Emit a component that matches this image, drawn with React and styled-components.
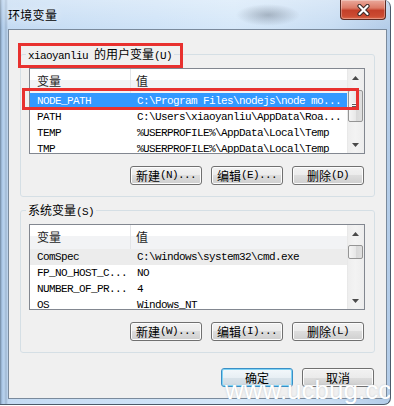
import React from 'react'
import styled, { createGlobalStyle } from 'styled-components'

const cjk = `"Noto Sans CJK SC", "Liberation Sans", sans-serif`
const mono = `"Liberation Mono", "Noto Sans CJK SC", monospace`

const GlobalStyle = createGlobalStyle`
  html, body {
    margin: 0;
    padding: 0;
    background: #fff;
  }
  body {
    width: 394px;
    height: 406px;
    overflow: hidden;
    font-family: ${cjk};
  }
`

const Window = styled.div`
  position: relative;
  width: 391px;
  height: 405px;
  box-sizing: border-box;
  padding: 0 3px 5px 8px;
  display: flex;
  flex-direction: column;
  overflow: hidden;
  border-right: 1px solid #4c5b6b;
  border-bottom: 1px solid #4c5b6b;
  border-radius: 0 7px 7px 0;
  background:
    radial-gradient(ellipse 32px 11px at 268px 15px, rgba(70, 80, 95, 0.35), rgba(70, 80, 95, 0) 100%),
    linear-gradient(180deg, rgba(255, 255, 255, 0.3) 0, rgba(255, 255, 255, 0) 28px),
    linear-gradient(90deg, #6f869e 0, #a9c6e6 2px, #b9d3ee 4px, #9fb7d2 6px, #c4dbf3 8px, #cfe3f7 40%, #d6e8f9 60%, #c8ddf3 85%, #b3cce8 100%);
`

const TitleBar = styled.div`
  height: 29px;
  flex: none;
  display: flex;
  justify-content: space-between;
  align-items: flex-start;
`

const Title = styled.span`
  font-family: ${cjk};
  font-size: 12px;
  line-height: 29px;
  letter-spacing: 0.3px;
  color: #000;
  text-shadow: 0 0 8px rgba(255, 255, 255, 0.9);
`

const CloseButton = styled.button`
  width: 46px;
  height: 20px;
  margin: 0 1px 0 0;
  padding: 0;
  box-sizing: border-box;
  border: 1px solid #5d2b23;
  border-top: none;
  border-radius: 0 0 4px 4px;
  background: linear-gradient(#eaa99c 0%, #dc7a66 42%, #c4402a 55%, #cb4b32 85%, #dc6a4c 100%);
  box-shadow: inset 0 0 0 1px rgba(255, 255, 255, 0.3);
  display: flex;
  align-items: center;
  justify-content: center;
`

const Panel = styled.div`
  flex: 1;
  border: 1px solid #7a8a9c;
  background: #f0f0f0;
  padding: 16px 11px 0 11px;
  display: flex;
  flex-direction: column;
`

const Group = styled.fieldset`
  margin: ${({ $mt }) => $mt}px 0 0 0;
  padding: 6px 9px 11px 8px;
  border: 1px solid #d5dfe5;
  border-radius: 3px;
  min-width: 0;
`

const Legend = styled.legend`
  padding: 0 2px;
  margin-left: -3px;
  height: 16px;
  line-height: 16px;
  font-family: ${cjk};
  font-size: 12px;
  color: #000;
  white-space: nowrap;
`

const Mono = styled.span`
  font-family: ${mono};
  font-size: 11px;
  letter-spacing: -0.6px;
`

const ListBox = styled.div`
  height: 86px;
  box-sizing: border-box;
  border: 1px solid #828790;
  background: #fff;
  display: flex;
`

const Columns = styled.div`
  flex: 1;
  min-width: 0;
  display: flex;
  flex-direction: column;
  overflow: hidden;
`

const HeaderRow = styled.div`
  height: 24px;
  flex: none;
  display: flex;
  background: linear-gradient(#fff 0, #fff 45%, #f2f3f5 45%, #f2f3f5 100%);
`

const HeadCell = styled.div`
  box-sizing: border-box;
  width: ${({ $first }) => ($first ? '101px' : 'auto')};
  flex: ${({ $first }) => ($first ? 'none' : 1)};
  padding-left: ${({ $first }) => ($first ? 7 : 5)}px;
  border-right: ${({ $first }) => ($first ? '1px solid #e3e5e8' : 'none')};
  font-family: ${cjk};
  font-size: 12px;
  line-height: 23px;
  color: #1e1e1e;
`

const Row = styled.div`
  height: 16px;
  flex: none;
  display: flex;
  background: ${({ $state }) => ($state === 'focus' ? '#3399ff' : $state === 'idle' ? '#ececec' : 'transparent')};
  color: ${({ $state }) => ($state === 'focus' ? '#fff' : '#000')};
`

const Cell = styled.div`
  box-sizing: border-box;
  width: ${({ $first }) => ($first ? '101px' : 'auto')};
  flex: ${({ $first }) => ($first ? 'none' : 1)};
  padding-left: ${({ $first }) => ($first ? 7 : 6)}px;
  font-family: ${mono};
  font-size: 11px;
  letter-spacing: -0.6px;
  line-height: 16px;
  white-space: nowrap;
  overflow: hidden;
`

const ScrollBar = styled.div`
  width: 17px;
  flex: none;
  display: flex;
  flex-direction: column;
  background: linear-gradient(to right, #e3e3e3 0, #eeeeee 1px, #f3f3f3 50%, #ededed 100%);
`

const Arrow = styled.div`
  height: 17px;
  flex: none;
  display: flex;
  align-items: center;
  justify-content: center;
`

const Track = styled.div`
  flex: 1;
  min-height: 0;
`

const Thumb = styled.div`
  margin: ${({ $top }) => $top}px 1px 0;
  height: ${({ $h }) => $h}px;
  box-sizing: border-box;
  border: 1px solid #959595;
  border-radius: 2px;
  background: linear-gradient(to right, #f5f5f5, #e8e8e8 50%, #d8d8d8 50%, #e0e0e0);
  display: flex;
  align-items: center;
  justify-content: center;
`

const Grip = styled.span`
  width: 7px;
  height: 6px;
  background: repeating-linear-gradient(#fbfbfb 0 1px, #5d5d5d 1px 2px);
`

const ButtonRow = styled.div`
  margin-top: ${({ $mt }) => $mt}px;
  padding-right: 1px;
  display: flex;
  justify-content: flex-end;
  gap: 9px;
`

const Button = styled.button`
  width: 72px;
  height: 19px;
  box-sizing: border-box;
  margin: 0;
  padding: 0;
  border: 1px solid ${({ $default }) => ($default ? '#3a8fc6' : '#707070')};
  border-radius: 3px;
  background: ${({ $default }) =>
    $default
      ? 'linear-gradient(#f3f8fb 0%, #e8eff4 50%, #d9e3ea 50%, #cfdae2 100%)'
      : 'linear-gradient(#f2f2f2 0%, #ebebeb 50%, #dddddd 50%, #cfcfcf 100%)'};
  box-shadow: inset 0 0 0 1px ${({ $default }) => ($default ? '#7fd3f5' : '#fcfcfc')};
  font-family: ${cjk};
  font-size: 12px;
  line-height: 17px;
  color: #000;
  display: flex;
  align-items: center;
  justify-content: center;
  white-space: nowrap;
`

const Mark = styled.div`
  position: absolute;
  left: ${({ $x }) => $x}px;
  top: ${({ $y }) => $y}px;
  width: ${({ $w }) => $w}px;
  height: ${({ $h }) => $h}px;
  box-sizing: border-box;
  border: 3px solid #e8312f;
  pointer-events: none;
`

const Watermark = styled.span`
  position: absolute;
  left: 225px;
  top: 377px;
  font-family: "Liberation Sans", Arial, sans-serif;
  font-size: 26px;
  line-height: 26px;
  color: #fff;
  white-space: nowrap;
  pointer-events: none;
  text-shadow: 0 0 2px rgba(110, 130, 150, 0.35);
`

const userVars = [
  ['NODE_PATH', 'C:\\Program Files\\nodejs\\node mo...'],
  ['PATH', 'C:\\Users\\xiaoyanliu\\AppData\\Roa...'],
  ['TEMP', '%USERPROFILE%\\AppData\\Local\\Temp'],
  ['TMP', '%USERPROFILE%\\AppData\\Local\\Temp'],
]

const sysVars = [
  ['ComSpec', 'C:\\windows\\system32\\cmd.exe'],
  ['FP_NO_HOST_C...', 'NO'],
  ['NUMBER_OF_PR...', '4'],
  ['OS', 'Windows_NT'],
]

const UpArrow = () => (
  <svg width="7" height="4" viewBox="0 0 7 4">
    <polygon points="0,4 3.5,0 7,4" fill="#4a4a4a" />
  </svg>
)

const DownArrow = () => (
  <svg width="7" height="4" viewBox="0 0 7 4">
    <polygon points="0,0 7,0 3.5,4" fill="#4a4a4a" />
  </svg>
)

const VarList = ({ rows, selected, state, thumbTop, thumbHeight, grip }) => (
  <ListBox>
    <Columns>
      <HeaderRow>
        <HeadCell $first>变量</HeadCell>
        <HeadCell>值</HeadCell>
      </HeaderRow>
      {rows.map(([name, value], i) => (
        <Row key={name} $state={i === selected ? state : undefined}>
          <Cell $first>{name}</Cell>
          <Cell>{value}</Cell>
        </Row>
      ))}
    </Columns>
    <ScrollBar>
      <Arrow>
        <UpArrow />
      </Arrow>
      <Track>
        <Thumb $top={thumbTop} $h={thumbHeight}>
          {grip && <Grip />}
        </Thumb>
      </Track>
      <Arrow>
        <DownArrow />
      </Arrow>
    </ScrollBar>
  </ListBox>
)

const VarButtons = ({ keys }) => (
  <ButtonRow $mt={12}>
    <Button>
      新建<Mono>({keys[0]})...</Mono>
    </Button>
    <Button>
      编辑<Mono>({keys[1]})...</Mono>
    </Button>
    <Button>
      删除<Mono>({keys[2]})</Mono>
    </Button>
  </ButtonRow>
)

const App = () => (
  <>
    <GlobalStyle />
    <Window>
      <TitleBar>
        <Title>环境变量</Title>
        <CloseButton aria-label="关闭">
          <svg width="13" height="12" viewBox="0 0 13 12">
            <path d="M2.5 2 L10.5 10 M10.5 2 L2.5 10" stroke="#3b2a28" strokeWidth="4.2" strokeLinecap="round" />
            <path d="M2.5 2 L10.5 10 M10.5 2 L2.5 10" stroke="#fff" strokeWidth="2.2" strokeLinecap="round" />
          </svg>
        </CloseButton>
      </TitleBar>
      <Panel>
        <Group $mt={0}>
          <Legend>
            <Mono>xiaoyanliu </Mono>的用户变量<Mono>(U)</Mono>
          </Legend>
          <VarList rows={userVars} selected={0} state="focus" thumbTop={4} thumbHeight={32} grip />
          <VarButtons keys={['N', 'E', 'D']} />
        </Group>
        <Group $mt={5}>
          <Legend>
            系统变量<Mono>(S)</Mono>
          </Legend>
          <VarList rows={sysVars} selected={0} state="idle" thumbTop={3} thumbHeight={14} />
          <VarButtons keys={['W', 'I', 'L']} />
        </Group>
        <ButtonRow $mt={15}>
          <Button $default>确定</Button>
          <Button>取消</Button>
        </ButtonRow>
      </Panel>
      <Mark $x={18} $y={43} $w={165} $h={25} />
      <Mark $x={22} $y={88} $w={337} $h={22} />
      <Watermark>www.ucbug.cc</Watermark>
    </Window>
  </>
)

export default App
